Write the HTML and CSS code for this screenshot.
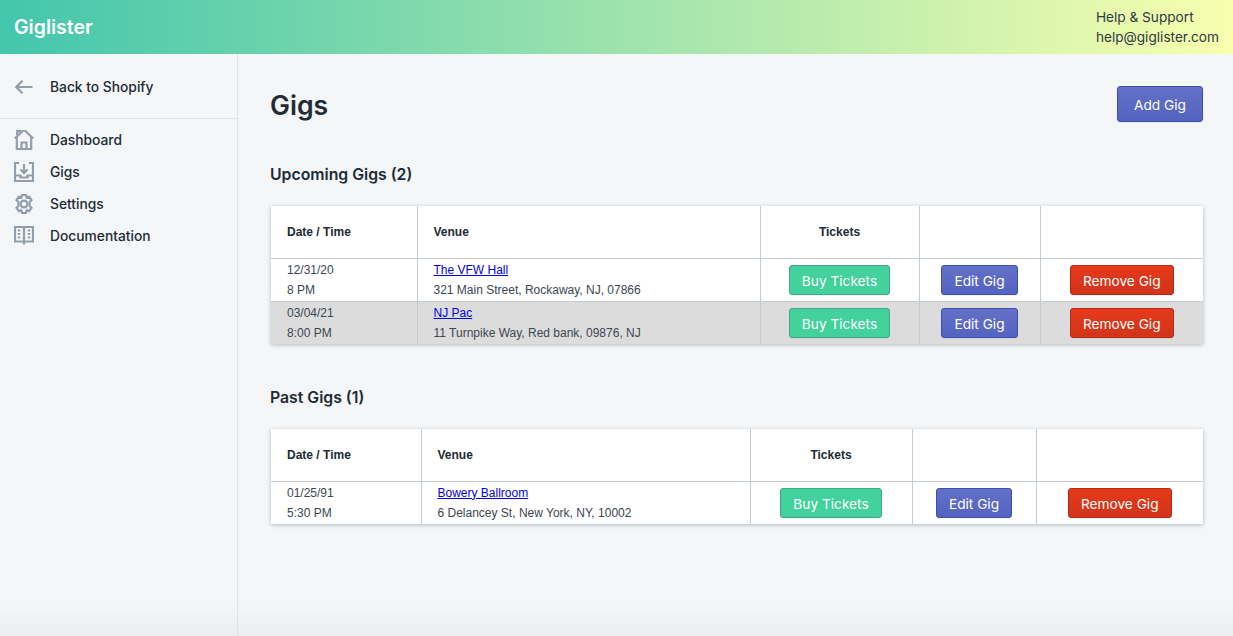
FILE: index.html
```html
<!DOCTYPE html>
<html>

<head>
    <meta charset="UTF-8">
    <title>Giglister</title>
    <link rel="stylesheet" href="styles.css">
</head>

<body>
    <header class="topbar">
        <div class="logo">Giglister</div>
        <div class="support">
            <div>Help &amp; Support</div>
            <div>help@giglister.com</div>
        </div>
    </header>
    <div class="frame">
        <nav class="sidebar">
            <div class="backRow">
                <a class="navItem">
                    <svg class="icon" viewBox="0 0 20 20"><path d="M18.5 10H2.500M8.500 3.800L2.200 10l6.300 6.200" /></svg>
                    Back to Shopify
                </a>
            </div>
            <div class="navList">
                <a class="navItem">
                    <svg class="icon" viewBox="0 1.500 20 20"><path d="M2.800 8.600V20.500h14.400V8.600M.8 10L9.200 2h1.600l8.400 8M3.200 6.600V2.500h3v1.400M7.500 20.500v-6.500h5v6.500" /></svg>
                    Dashboard
                </a>
                <a class="navItem">
                    <svg class="icon" viewBox="0 0 20 20"><path d="M5 1H1v18h18V1h-4M1 13.500h5.500v2h7v-2H19M10 2v8.500M6.500 7.500l3.500 3.500 3.500-3.500" /></svg>
                    Gigs
                </a>
                <a class="navItem">
                    <svg class="icon" viewBox="0 1 20 20">
                        <path d="M8 2h4l.7 2.700 2.500-.9 2.300 3.300-1.900 2 0 3.800 1.900 2-2.300 3.300-2.500-.9L12 20H8l-.7-2.700-2.500.9-2.300-3.300 1.900-2 0-3.800-1.900-2 2.300-3.300 2.500.9z" />
                        <circle cx="10" cy="11" r="3.400" />
                    </svg>
                    Settings
                </a>
                <a class="navItem">
                    <svg class="icon" viewBox="0 1 20 20"><path d="M10 2H1V16.500H19V2H10V19.500M3.800 5.500h2.500M3.800 9h2.500M3.800 12.500h2.500M13.700 5.500h2.500M13.700 9h2.500M13.700 12.500h2.500" /></svg>
                    Documentation
                </a>
            </div>
        </nav>
        <main class="content">
            <div class="pageHead">
                <h1>Gigs</h1>
                <button class="btn btnPrimary btnLarge">Add Gig</button>
            </div>

            <h2>Upcoming Gigs (2)</h2>
            <table class="gigTable">
                <colgroup>
                    <col class="upDate"><col class="upVenue"><col class="upTickets"><col class="upEdit"><col class="upRemove">
                </colgroup>
                <tr>
                    <th>Date / Time</th>
                    <th>Venue</th>
                    <th class="center">Tickets</th>
                    <th></th>
                    <th></th>
                </tr>
                <tr>
                    <td>12/31/20<br>8 PM</td>
                    <td><a href="#">The VFW Hall</a><br>321 Main Street, Rockaway, NJ, 07866</td>
                    <td class="center"><button class="btn btnGreen">Buy Tickets</button></td>
                    <td class="center"><button class="btn btnPrimary">Edit Gig</button></td>
                    <td class="center"><button class="btn btnRed">Remove Gig</button></td>
                </tr>
                <tr class="stripe">
                    <td>03/04/21<br>8:00 PM</td>
                    <td><a href="#">NJ Pac</a><br>11 Turnpike Way, Red bank, 09876, NJ</td>
                    <td class="center"><button class="btn btnGreen">Buy Tickets</button></td>
                    <td class="center"><button class="btn btnPrimary">Edit Gig</button></td>
                    <td class="center"><button class="btn btnRed">Remove Gig</button></td>
                </tr>
            </table>

            <h2>Past Gigs (1)</h2>
            <table class="gigTable">
                <colgroup>
                    <col class="pastDate"><col class="pastVenue"><col class="pastTickets"><col class="pastEdit"><col class="pastRemove">
                </colgroup>
                <tr>
                    <th>Date / Time</th>
                    <th>Venue</th>
                    <th class="center">Tickets</th>
                    <th></th>
                    <th></th>
                </tr>
                <tr>
                    <td>01/25/91<br>5:30 PM</td>
                    <td><a href="#">Bowery Ballroom</a><br>6 Delancey St, New York, NY, 10002</td>
                    <td class="center"><button class="btn btnGreen">Buy Tickets</button></td>
                    <td class="center"><button class="btn btnPrimary">Edit Gig</button></td>
                    <td class="center"><button class="btn btnRed">Remove Gig</button></td>
                </tr>
            </table>
        </main>
    </div>
</body>
</html>
```

FILE: styles.css
```css
* {
    box-sizing: border-box;
}
html, body {
    height: 100%;
}
body {
    display: flex;
    flex-direction: column;
    margin: 0;
    overflow: hidden;
    background: linear-gradient(to bottom, #f4f6f8 calc(100% - 36px), #eceef0 100%);
    color: #212b36;
    font-family: 'Inter', sans-serif;
    font-size: 13.7px;
    line-height: 20px;
}
.topbar {
    display: flex;
    flex: 0 0 54px;
    align-items: center;
    justify-content: space-between;
    padding: 0 14px;
    background: linear-gradient(to right, #43c6ac, #f8ffae);
}
.logo {
    color: white;
    font-size: 19.5px;
    font-weight: 600;
}
.support {
    color: #2f3a44;
    font-size: 13.65px;
}
.frame {
    display: flex;
    flex: 1;
}
.sidebar {
    flex: 0 0 238px;
    border-right: 1px solid #dfe3e8;
}
.backRow {
    padding: 17px 0 15px;
    border-bottom: 1px solid #dfe3e8;
}
.navList {
    padding-top: 5px;
}
.navItem {
    display: flex;
    align-items: center;
    gap: 16px;
    height: 32px;
    padding-left: 14px;
    font-size: 13.8px;
    font-weight: 500;
    color: #212b36;
}
.icon {
    width: 20px;
    height: 20px;
    fill: none;
    stroke: #919eab;
    stroke-width: 2.2;
}
.content {
    flex: 1;
    padding: 32px 30px 0 32px;
}
.pageHead {
    display: flex;
    align-items: center;
    justify-content: space-between;
    margin-bottom: 40px;
}
h1 {
    margin: 0;
    padding-top: 2px;
    font-size: 26.6px;
    line-height: 34px;
    font-weight: 600;
}
h2 {
    margin: 0 0 20px;
    padding-top: 1px;
    font-size: 15.8px;
    line-height: 23px;
    font-weight: 600;
}
.btn {
    min-height: 30px;
    padding: 2px 12px 0;
    border: 1px solid;
    border-radius: 3px;
    color: white;
    font-family: 'Inter', sans-serif;
    font-size: 13.7px;
    line-height: 20px;
    cursor: pointer;
    box-shadow: 0 1px 0 rgba(22, 29, 37, 0.05);
}
.btnLarge {
    min-height: 36px;
    padding: 2px 16px 0;
}
.btnPrimary {
    border-color: #3f4eae;
    background: linear-gradient(to bottom, #6371c7, #5563c1);
}
.btnGreen {
    border-color: #43a68c;
    background: #43d19e;
}
.btnRed {
    border-color: #b52c13;
    background: linear-gradient(to bottom, #e6391a, #d1341a);
}
.gigTable {
    width: 932px;
    margin: 0 0 41px 1px;
    table-layout: fixed;
    border-collapse: collapse;
    background: white;
    box-shadow: 0 1px 4px rgba(33, 43, 54, 0.3);
    font-family: 'Liberation Sans', Arial, sans-serif;
    font-size: 12px;
}
.gigTable th {
    height: 52px;
    padding: 0 16px;
    border-left: 1px solid #c4cdd5;
    border-bottom: 1px solid #c4cdd5;
    text-align: left;
    color: #212b36;
    font-weight: bold;
}
.gigTable td {
    height: 43px;
    padding: 0 16px;
    border-left: 1px solid #c4cdd5;
    border-bottom: 1px solid #c4cdd5;
    color: #3c4650;
    line-height: 20px;
}
.gigTable tr:last-child td {
    border-bottom: 0;
}
.gigTable th:first-child, .gigTable td:first-child {
    border-left: 0;
}
.gigTable a {
    color: #0000ee;
}
.gigTable .center {
    padding: 0;
    text-align: center;
}
.stripe td {
    background: #dcdcdc;
}
.upDate { width: 146px; }
.upVenue { width: 343px; }
.upTickets { width: 159px; }
.upEdit { width: 121px; }
.upRemove { width: 163px; }
.pastDate { width: 150px; }
.pastVenue { width: 329px; }
.pastTickets { width: 162px; }
.pastEdit { width: 124px; }
.pastRemove { width: 167px; }
```
